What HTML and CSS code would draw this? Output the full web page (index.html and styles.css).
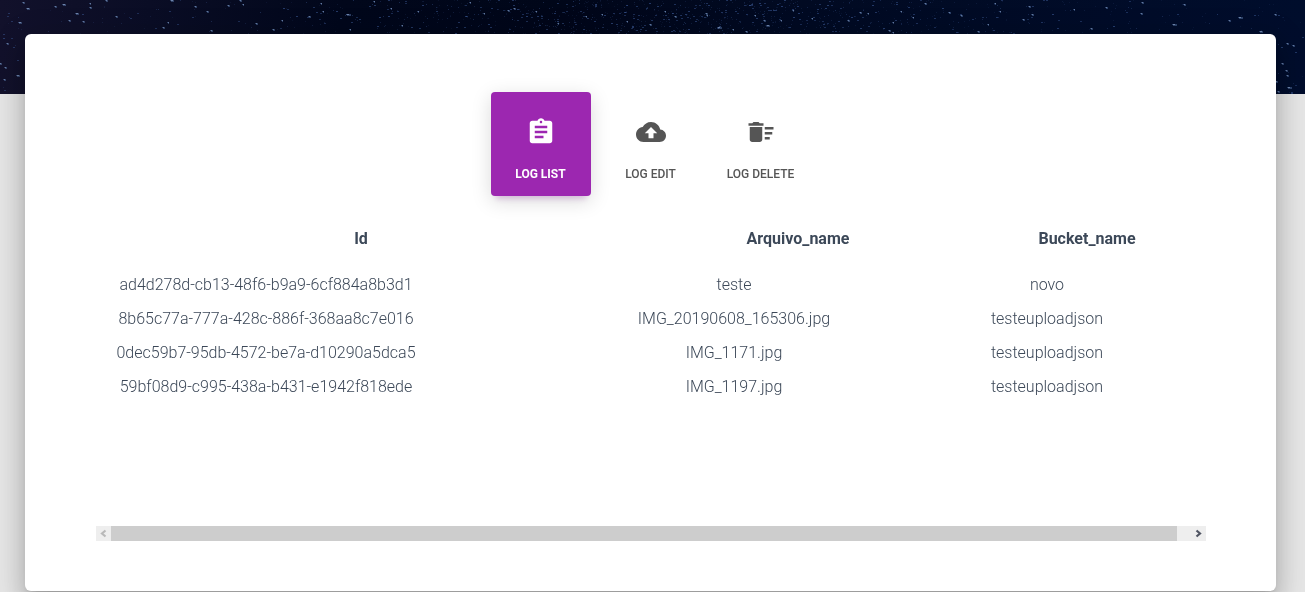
FILE: index.html
```html
<!DOCTYPE html>
<html lang="pt-BR">
<head>
<meta charset="utf-8">
<title>Log</title>
<link rel="stylesheet" href="styles.css">
</head>
<body>
<header class="hero"><canvas class="stars" width="1305" height="94"></canvas></header>
<main class="card">
  <nav class="pills">
    <a class="pill active">
      <svg viewBox="0 0 24 24"><path d="M19 3h-4.18C14.4 1.84 13.3 1 12 1c-1.3 0-2.4.84-2.82 2H5c-1.1 0-2 .9-2 2v14c0 1.1.9 2 2 2h14c1.1 0 2-.9 2-2V5c0-1.1-.9-2-2-2zm-7 0c.55 0 1 .45 1 1s-.45 1-1 1-1-.45-1-1 .45-1 1-1zm2 14H7v-2h7v2zm3-4H7v-2h10v2zm0-4H7V7h10v2z"/></svg>
      <span>LOG LIST</span>
    </a>
    <a class="pill">
      <svg viewBox="0 0 24 24"><path d="M19.35 10.04C18.67 6.59 15.64 4 12 4 9.11 4 6.6 5.64 5.35 8.04 2.34 8.36 0 10.91 0 14c0 3.31 2.69 6 6 6h13c2.76 0 5-2.24 5-5 0-2.64-2.05-4.78-4.65-4.96zM14 13v4h-4v-4H7l5-5 5 5h-3z"/></svg>
      <span>LOG EDIT</span>
    </a>
    <a class="pill">
      <svg viewBox="0 0 24 24"><path d="M15 16h4v2h-4zm0-8h7v2h-7zm0 4h6v2h-6zM3 18c0 1.1.9 2 2 2h6c1.1 0 2-.9 2-2V8H3v10zM14 5h-3l-1-1H6L5 5H2v2h12z"/></svg>
      <span>LOG DELETE</span>
    </a>
  </nav>
  <section class="log">
    <div class="row head"><span>Id</span><span>Arquivo_name</span><span>Bucket_name</span></div>
    <div class="row"><span>ad4d278d-cb13-48f6-b9a9-6cf884a8b3d1</span><span>teste</span><span>novo</span></div>
    <div class="row"><span>8b65c77a-777a-428c-886f-368aa8c7e016</span><span>IMG_20190608_165306.jpg</span><span>testeuploadjson</span></div>
    <div class="row"><span>0dec59b7-95db-4572-be7a-d10290a5dca5</span><span>IMG_1171.jpg</span><span>testeuploadjson</span></div>
    <div class="row"><span>59bf08d9-c995-438a-b431-e1942f818ede</span><span>IMG_1197.jpg</span><span>testeuploadjson</span></div>
  </section>
  <div class="scrollbar">
    <svg class="arrow off" viewBox="0 0 15 15"><path d="M9.5 4.5L6 7.5l3.5 3"/></svg>
    <div class="thumb"></div>
    <svg class="arrow" viewBox="0 0 15 15"><path d="M5.5 4.5L9 7.5l-3.5 3"/></svg>
  </div>
</main>
<script src="stars.js"></script>
</body>
</html>
```
FILE: styles.css
```css
* { box-sizing: border-box; }
body {
  margin: 0;
  height: 592px;
  overflow: hidden;
  background: #e5e5e5;
  color: #3c4858;
  font-family: Roboto, sans-serif;
  font-size: 16px;
  font-weight: 300;
}
.hero {
  height: 94px;
  background: linear-gradient(90deg, #12112b 0, #0a0d25 150px, #01071b 340px, #000619 560px, #010a22 800px, #000d2c 1305px);
}
.stars { display: block; }
.card {
  position: relative;
  width: 1251px;
  height: 557px;
  margin: -60px 0 0 25px;
  padding: 58px 70px 0 71px;
  background: #fff;
  border-radius: 6px;
  box-shadow: 0 16px 24px 2px rgba(0,0,0,.14), 0 6px 30px 5px rgba(0,0,0,.12), 0 8px 10px -5px rgba(0,0,0,.2);
}
.pills { display: flex; gap: 10px; padding-left: 395px; }
.pill {
  display: flex;
  flex-direction: column;
  align-items: center;
  width: 100px;
  height: 104px;
  padding-top: 25px;
  border-radius: 4px;
  color: #555;
  font-size: 12px;
  font-weight: 500;
  line-height: 24px;
}
.pill svg { width: 30px; height: 30px; margin-bottom: 15px; fill: currentColor; }
.pill span { margin-right: 1px; }
.active {
  background: #9c27b0;
  color: #fff;
  font-weight: 700;
  box-shadow: 0 5px 20px 0 rgba(0,0,0,.15), 0 8px 5px -5px rgba(156,39,176,.2);
}
.log { height: 326px; padding-top: 26px; }
.row {
  display: grid;
  grid-template-columns: 340px 200px 200px;
  column-gap: 198px;
  height: 34px;
  line-height: 34px;
  text-align: center;
  white-space: nowrap;
}
.row span:last-child { margin-left: -85px; margin-right: 85px; }
.head { height: 46px; font-weight: 700; padding-left: 95px; column-gap: 167px; }
.head span:last-child { margin-left: -78px; margin-right: 78px; }
.scrollbar { display: flex; margin-top: 4px; height: 15px; background: #eee; justify-content: space-between; }
.thumb { width: 1066px; background: #cdcdcd; margin-right: 14px; }
.arrow { width: 15px; height: 15px; fill: none; stroke: #505563; stroke-width: 2.2; }
.off { stroke: #b9b9b9; }
```
FILE: stars.js
```js
const ctx = document.querySelector('.stars').getContext('2d');
let seed = 71;
function rnd() {
  seed = (seed * 16807) % 2147483647;
  return seed / 2147483647;
}
// Faint dust, densest toward the middle of the sky.
for (let i = 0; i < 7500; i++) {
  const x = rnd() * 1305, y = rnd() * 94, a = rnd(), keep = rnd();
  const density = 0.08 + 0.92 * Math.exp(-Math.pow((x - 670) / 270, 2));
  if (keep > density) continue;
  ctx.fillStyle = `rgba(60,90,150,${0.12 + a * a * 0.5})`;
  ctx.fillRect(Math.floor(x), Math.floor(y), a > 0.75 ? 2 : 1, 1);
}
// Brighter stars: x, y, width.
const bright = [
  [23,2,2],[27,8,3],[55,6,2],[63,4,3],[90,3,1],[90,7,2],[106,0,2],[19,22,3],[69,20,2],[83,21,2],[76,13,3],
  [116,16,2],[7,43,2],[0,63,2],[5,67,2],[17,75,3],[4,79,2],[171,0,3],[195,6,2],[207,11,2],[228,5,2],
  [163,27,2],[168,22,1],[211,30,2],[256,23,2],[273,29,2],[282,20,1],[309,16,2],[347,14,4],[350,29,1],
  [321,3,1],[323,11,1],[374,1,1],[391,8,1],[402,25,1],[418,11,1],[240,0,2],[243,4,1],
  [508,10,2],[514,8,2],[536,11,1],[558,23,1],[484,13,1],[470,2,1],[586,16,1],[602,14,1],[627,21,1],
  [650,24,2],[665,11,1],[675,16,2],[706,13,2],[707,15,1],[718,27,4],[733,29,1],[746,31,2],[755,15,1],
  [764,20,2],[767,25,3],[781,20,1],[793,10,1],[812,18,1],[848,20,2],[860,12,2],[868,13,1],
  [893,22,1],[901,11,1],[913,17,1],[889,30,2],[893,32,1],[925,3,2],[949,12,2],[961,15,2],[995,3,1],
  [1000,11,1],[1029,6,2],[1032,14,2],[1023,19,2],[988,24,1],[978,31,2],[1074,9,1],[1091,28,2],
  [1106,7,2],[1142,2,2],[1141,13,2],[1173,24,4],[1184,4,2],[1239,17,4],[1229,20,2],[1260,31,3],[1275,14,2],
  [1287,43,2],[1293,45,2],[1282,63,2],[1286,70,2],[1287,75,2],[1276,81,2],[1288,87,4],[1278,91,2]
];
for (const [x, y, w] of bright) {
  ctx.fillStyle = w > 2 ? 'rgba(165,180,205,.8)' : 'rgba(150,165,190,.75)';
  ctx.fillRect(x, y, w > 2 ? 2 : 1, 1);
  ctx.fillStyle = 'rgba(85,115,165,.5)';
  ctx.fillRect(x - 1, y, w + 1, 1);
  ctx.fillRect(x, y + 1, w, 1);
}
```
